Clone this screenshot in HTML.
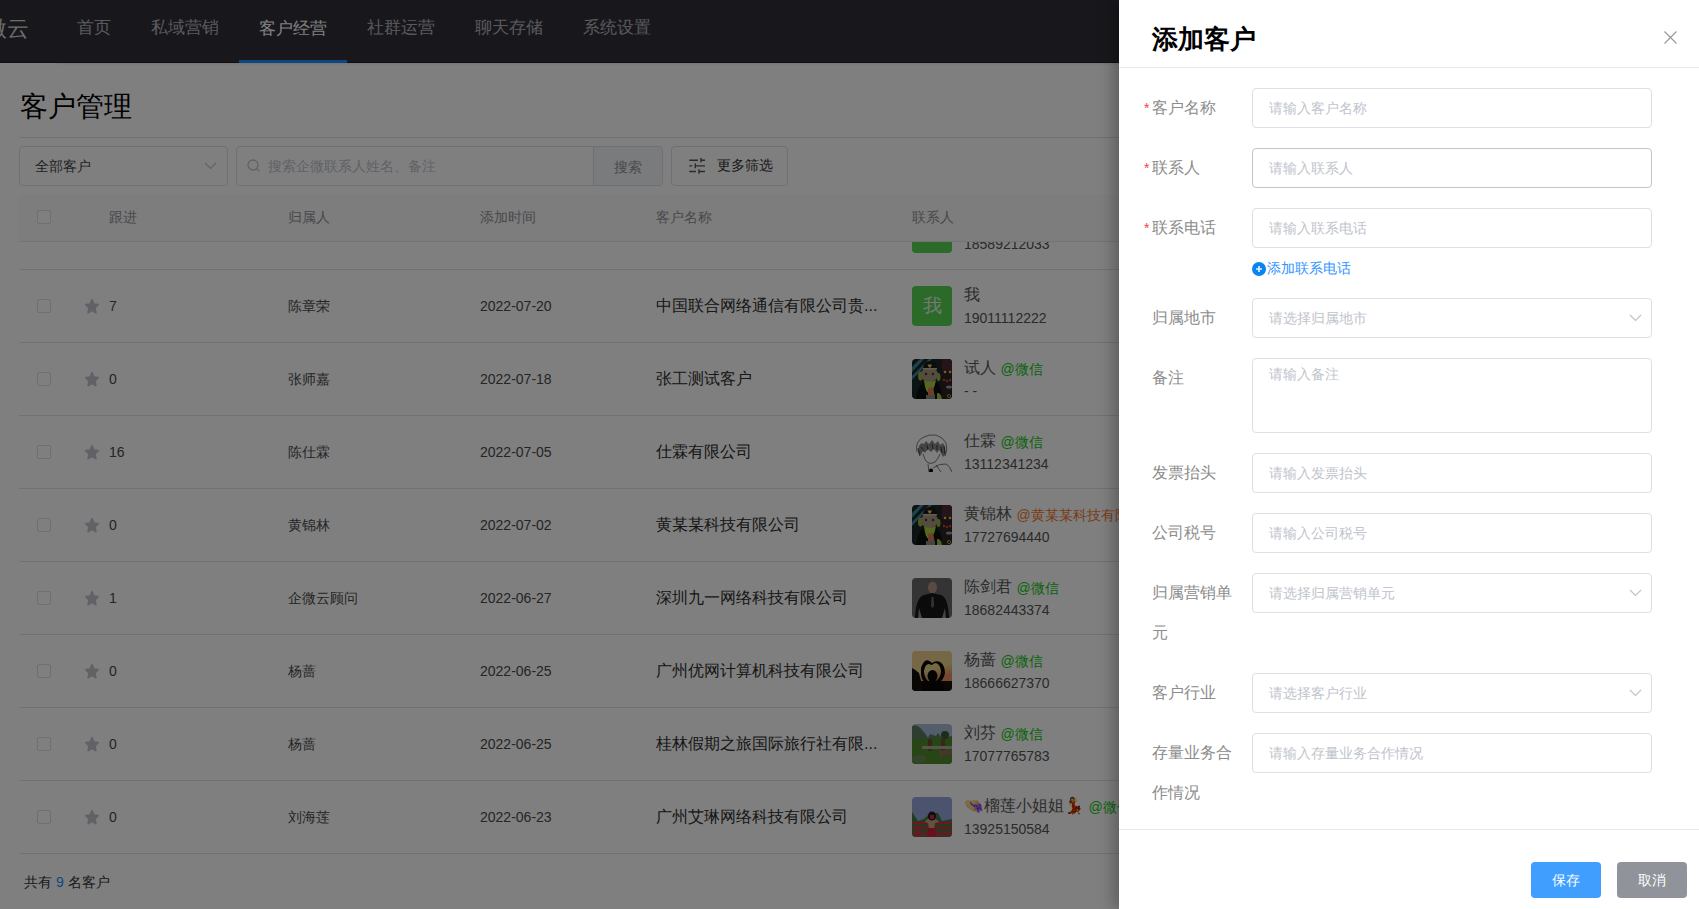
<!DOCTYPE html>
<html><head><meta charset="utf-8">
<style>
*{box-sizing:border-box;margin:0;padding:0}
html,body{width:1699px;height:909px;overflow:hidden;background:#fff;font-family:"Liberation Sans",sans-serif;position:relative}
.a{position:absolute;white-space:nowrap}
.nav{position:absolute;left:0;top:0;width:1699px;height:63px;background:#303039}
.nav .t{position:absolute;top:18px;font-size:17px;line-height:20px;color:#b4b4b8}
.nav .t.on{color:#fff;top:19px}
.line{position:absolute;height:1px;background:#dfe2ea}
.box{position:absolute;border:1px solid #dcdfe6;border-radius:4px;background:#fff}
.chev{position:absolute;width:12px;height:7px}
.th{position:absolute;top:208px;font-size:14px;line-height:18px;color:#909399}
.cb{position:absolute;width:14px;height:14px;border:1px solid #dcdfe6;border-radius:2px;background:#fff}
.row{position:absolute;left:19px;width:1680px;height:73px}
.mask{position:absolute;left:0;top:0;width:1699px;height:909px;background:rgba(0,0,0,.5)}
.drawer{position:absolute;left:1119px;top:0;width:580px;height:909px;background:#fff;box-shadow:-6px 0 14px rgba(0,0,0,.25)}
.lbl{position:absolute;left:33px;font-size:16px;line-height:40px;color:#8c8c8c}
.req{position:absolute;left:25px;font-size:14px;color:#f43f3f}
.inp{position:absolute;left:133px;width:400px;height:40px;border:1px solid #dcdfe6;border-radius:4px}
.ph{position:absolute;left:16px;top:0;font-size:14px;line-height:38px;color:#c0c4cc}
</style></head><body>

<div class="nav">
  <div class="a" style="left:-15px;top:17px;font-size:22px;line-height:24px;color:#d8d8d8">微云</div>
  <div class="t a" style="left:77px">首页</div>
  <div class="t a" style="left:151px">私域营销</div>
  <div class="t a on" style="left:259px">客户经营</div>
  <div class="t a" style="left:367px">社群运营</div>
  <div class="t a" style="left:475px">聊天存储</div>
  <div class="t a" style="left:583px">系统设置</div>
  <div class="a" style="left:0;top:62px;width:1699px;height:1px;background:#202028"></div>
  <div class="a" style="left:239px;top:60px;width:108px;height:3px;background:#1890ff"></div>
</div>

<div class="a" style="left:0;top:63px;width:57px;height:1px;background:#fff;box-shadow:0 0 0 0 #fff"></div>
<div class="a" style="left:57px;top:63px;width:1642px;height:2px;background:linear-gradient(#e8e8e8,#fff)"></div>
<div class="a" style="left:20px;top:92px;font-size:28px;line-height:30px;color:#000">客户管理</div>
<div class="line" style="left:19px;top:137px;width:1680px"></div>

<div class="box" style="left:19px;top:146px;width:209px;height:40px"></div>
<div class="a" style="left:35px;top:157px;font-size:14px;line-height:18px;color:#444">全部客户</div>
<svg class="a" style="left:204px;top:162px" width="13" height="8" viewBox="0 0 13 8"><path d="M1 1 L6.5 6.5 L12 1" fill="none" stroke="#c0c4cc" stroke-width="1.2"/></svg>

<div class="box" style="left:236px;top:146px;width:427px;height:40px"></div>
<div class="a" style="left:593px;top:147px;width:69px;height:38px;background:#f5f7fa;border-left:1px solid #dcdfe6;border-radius:0 4px 4px 0"></div>
<svg class="a" style="left:247px;top:159px" width="14" height="14" viewBox="0 0 14 14"><circle cx="6" cy="6" r="5" fill="none" stroke="#c0c4cc" stroke-width="1.3"/><path d="M9.5 9.5 L12.5 12.5" stroke="#c0c4cc" stroke-width="1.3"/></svg>
<div class="a" style="left:268px;top:157px;font-size:14px;line-height:18px;color:#c0c4cc">搜索企微联系人姓名、备注</div>
<div class="a" style="left:614px;top:158px;font-size:14px;line-height:18px;color:#909399">搜索</div>

<div class="box" style="left:671px;top:146px;width:117px;height:40px"></div>
<svg class="a" style="left:689px;top:158px" width="16" height="16" viewBox="0 0 16 16"><g stroke="#555" stroke-width="1.4" fill="none"><path d="M0.3 2.3H9M12 2.3H16M12 0V4.6"/><path d="M0.3 7.9H3.3M6.3 7.9H16M6.3 5.5V10.3"/><path d="M0.3 13.5H7M10 13.5H16M10 11.2V15.8"/></g></svg>
<div class="a" style="left:717px;top:156px;font-size:14px;line-height:18px;color:#333">更多筛选</div>

<!-- table body rows -->
<div id="rows"><div class="line" style="left:19px;top:269px;width:1680px"></div>
<div class="cb" style="left:37px;top:299px"></div>
<svg class="a" style="left:85px;top:299px" width="14" height="15" viewBox="1 1.2 22 21.5" preserveAspectRatio="none"><path d="M12 2.2l2.9 6.3 6.8.8-5 4.7 1.4 6.8L12 17.4l-6.1 3.4 1.4-6.8-5-4.7 6.8-.8z" fill="#c0c4cc" stroke="#c0c4cc" stroke-width="2.6" stroke-linejoin="round"/></svg>
<div class="a" style="left:109px;top:297px;font-size:14px;line-height:18px;color:#4a4a4a">7</div>
<div class="a" style="left:288px;top:297px;font-size:14px;line-height:18px;color:#4a4a4a">陈章荣</div>
<div class="a" style="left:480px;top:297px;font-size:14px;line-height:18px;color:#4a4a4a">2022-07-20</div>
<div class="a" style="left:656px;top:296px;font-size:16px;line-height:20px;color:#2e2e2e">中国联合网络通信有限公司贵...</div>
<div class="a" style="left:912px;top:286px;width:40px;height:40px;border-radius:4px;background:#56d452;color:#e8f5e8;font-size:19px;line-height:40px;text-align:center">我</div>
<div class="a" style="left:964px;top:285px;font-size:16px;line-height:20px;color:#585858">我</div>
<div class="a" style="left:964px;top:309px;font-size:14px;line-height:18px;color:#555">19011112222</div>
<div class="line" style="left:19px;top:342px;width:1680px"></div>
<div class="cb" style="left:37px;top:372px"></div>
<svg class="a" style="left:85px;top:372px" width="14" height="15" viewBox="1 1.2 22 21.5" preserveAspectRatio="none"><path d="M12 2.2l2.9 6.3 6.8.8-5 4.7 1.4 6.8L12 17.4l-6.1 3.4 1.4-6.8-5-4.7 6.8-.8z" fill="#c0c4cc" stroke="#c0c4cc" stroke-width="2.6" stroke-linejoin="round"/></svg>
<div class="a" style="left:109px;top:370px;font-size:14px;line-height:18px;color:#4a4a4a">0</div>
<div class="a" style="left:288px;top:370px;font-size:14px;line-height:18px;color:#4a4a4a">张师嘉</div>
<div class="a" style="left:480px;top:370px;font-size:14px;line-height:18px;color:#4a4a4a">2022-07-18</div>
<div class="a" style="left:656px;top:369px;font-size:16px;line-height:20px;color:#2e2e2e">张工测试客户</div>
<svg class="a" style="left:912px;top:359px;border-radius:4px" width="40" height="40" viewBox="0 0 40 40"><rect width="40" height="40" fill="#1a2426"/><path d="M0 8 L8 0 H12 L0 13Z M0 17 L17 0 H20 L0 21Z" fill="#3a8898"/><rect x="29" y="0" width="11" height="40" fill="#2a2224"/><path d="M30 0 H40 V12 H30Z" fill="#4a2830"/><circle cx="33" cy="13" r="1.3" fill="#e8c040"/><circle cx="38" cy="13" r="1.3" fill="#e8c040"/><g fill="#d04030"><circle cx="32" cy="21" r="1.2"/><circle cx="35" cy="22" r="1.2"/><circle cx="38" cy="21" r="1.2"/></g><ellipse cx="37" cy="28" rx="3" ry="1.5" fill="#9a9a9a"/><circle cx="37" cy="37" r="1.6" fill="none" stroke="#d0b040" stroke-width="0.8"/><path d="M4 40 Q6 26 12 23 H24 Q30 26 30 40Z" fill="#0c1010"/><ellipse cx="8.5" cy="17" rx="2.5" ry="4.5" fill="#9ab040"/><ellipse cx="26.5" cy="18" rx="2" ry="4" fill="#9ab040"/><ellipse cx="17.5" cy="15.5" rx="8.5" ry="7.5" fill="#a89880"/><circle cx="14" cy="15" r="1.2" fill="#3a3028"/><circle cx="21" cy="15" r="1.2" fill="#3a3028"/><path d="M12 21 Q13 33 17 34 Q22 33 24 21 Q18 24 12 21Z" fill="#b0cc48"/><path d="M16 29 L21 28 L23 38 H16Z" fill="#d88050"/><rect x="14" y="36" width="9" height="4" fill="#8a8a8a"/><path d="M25 34 Q29 33 30 40 H25Z" fill="#a0c040"/><path d="M11 9 Q12 2 18 2 Q25 2 25 9Z" fill="#181818"/><path d="M15.5 5.5 L20 5.5 L18.5 8.5 L17 8.5Z" fill="#e8d060"/><path d="M11 9 H25 V10.5 H11Z" fill="#c8b898"/></svg>
<div class="a" style="left:964px;top:358px;font-size:16px;line-height:20px;color:#585858">试人 <span style="font-size:14px;color:#10c810;position:relative;top:1px">@微信</span></div>
<div class="a" style="left:964px;top:382px;font-size:14px;line-height:18px;color:#555">- -</div>
<div class="line" style="left:19px;top:415px;width:1680px"></div>
<div class="cb" style="left:37px;top:445px"></div>
<svg class="a" style="left:85px;top:445px" width="14" height="15" viewBox="1 1.2 22 21.5" preserveAspectRatio="none"><path d="M12 2.2l2.9 6.3 6.8.8-5 4.7 1.4 6.8L12 17.4l-6.1 3.4 1.4-6.8-5-4.7 6.8-.8z" fill="#c0c4cc" stroke="#c0c4cc" stroke-width="2.6" stroke-linejoin="round"/></svg>
<div class="a" style="left:109px;top:443px;font-size:14px;line-height:18px;color:#4a4a4a">16</div>
<div class="a" style="left:288px;top:443px;font-size:14px;line-height:18px;color:#4a4a4a">陈仕霖</div>
<div class="a" style="left:480px;top:443px;font-size:14px;line-height:18px;color:#4a4a4a">2022-07-05</div>
<div class="a" style="left:656px;top:442px;font-size:16px;line-height:20px;color:#2e2e2e">仕霖有限公司</div>
<svg class="a" style="left:912px;top:432px" width="40" height="40" viewBox="0 0 40 40"><g fill="none" stroke="#444" stroke-width="0.7"><path d="M5 20 Q3 10 10 6 Q16 2 24 3 Q31 5 34 11 Q36 18 33 24"/><path d="M11 22 Q13 29 16 31 Q20 32 23 30 Q26 27 28 22"/><path d="M16 32 L17 40 M21 36 Q28 31 34 32 Q38 34 40 40 M24 33 L29 40"/></g><path d="M7 14 Q9 10 12 12 L14 9 L17 12 L20 8 L23 12 L26 9 L28 13 L31 11 L33 15 L34 22 L31 25 L29 21 L27 18 L25 21 L22 17 L19 20 L16 17 L13 21 L11 19 L9 23 L6 21Z" fill="#8a8a8a"/><path d="M9 15 L12 19 M15 13 L16 18 M20 12 L21 17 M25 13 L25 18 M29 15 L30 21 M6 16 L8 24 M32 14 L33 22" stroke="#333" stroke-width="0.9"/><circle cx="19" cy="38.5" r="2" fill="#000"/></svg>
<div class="a" style="left:964px;top:431px;font-size:16px;line-height:20px;color:#585858">仕霖 <span style="font-size:14px;color:#10c810;position:relative;top:1px">@微信</span></div>
<div class="a" style="left:964px;top:455px;font-size:14px;line-height:18px;color:#555">13112341234</div>
<div class="line" style="left:19px;top:488px;width:1680px"></div>
<div class="cb" style="left:37px;top:518px"></div>
<svg class="a" style="left:85px;top:518px" width="14" height="15" viewBox="1 1.2 22 21.5" preserveAspectRatio="none"><path d="M12 2.2l2.9 6.3 6.8.8-5 4.7 1.4 6.8L12 17.4l-6.1 3.4 1.4-6.8-5-4.7 6.8-.8z" fill="#c0c4cc" stroke="#c0c4cc" stroke-width="2.6" stroke-linejoin="round"/></svg>
<div class="a" style="left:109px;top:516px;font-size:14px;line-height:18px;color:#4a4a4a">0</div>
<div class="a" style="left:288px;top:516px;font-size:14px;line-height:18px;color:#4a4a4a">黄锦林</div>
<div class="a" style="left:480px;top:516px;font-size:14px;line-height:18px;color:#4a4a4a">2022-07-02</div>
<div class="a" style="left:656px;top:515px;font-size:16px;line-height:20px;color:#2e2e2e">黄某某科技有限公司</div>
<svg class="a" style="left:912px;top:505px;border-radius:4px" width="40" height="40" viewBox="0 0 40 40"><rect width="40" height="40" fill="#1a2426"/><path d="M0 8 L8 0 H12 L0 13Z M0 17 L17 0 H20 L0 21Z" fill="#3a8898"/><rect x="29" y="0" width="11" height="40" fill="#2a2224"/><path d="M30 0 H40 V12 H30Z" fill="#4a2830"/><circle cx="33" cy="13" r="1.3" fill="#e8c040"/><circle cx="38" cy="13" r="1.3" fill="#e8c040"/><g fill="#d04030"><circle cx="32" cy="21" r="1.2"/><circle cx="35" cy="22" r="1.2"/><circle cx="38" cy="21" r="1.2"/></g><ellipse cx="37" cy="28" rx="3" ry="1.5" fill="#9a9a9a"/><circle cx="37" cy="37" r="1.6" fill="none" stroke="#d0b040" stroke-width="0.8"/><path d="M4 40 Q6 26 12 23 H24 Q30 26 30 40Z" fill="#0c1010"/><ellipse cx="8.5" cy="17" rx="2.5" ry="4.5" fill="#9ab040"/><ellipse cx="26.5" cy="18" rx="2" ry="4" fill="#9ab040"/><ellipse cx="17.5" cy="15.5" rx="8.5" ry="7.5" fill="#a89880"/><circle cx="14" cy="15" r="1.2" fill="#3a3028"/><circle cx="21" cy="15" r="1.2" fill="#3a3028"/><path d="M12 21 Q13 33 17 34 Q22 33 24 21 Q18 24 12 21Z" fill="#b0cc48"/><path d="M16 29 L21 28 L23 38 H16Z" fill="#d88050"/><rect x="14" y="36" width="9" height="4" fill="#8a8a8a"/><path d="M25 34 Q29 33 30 40 H25Z" fill="#a0c040"/><path d="M11 9 Q12 2 18 2 Q25 2 25 9Z" fill="#181818"/><path d="M15.5 5.5 L20 5.5 L18.5 8.5 L17 8.5Z" fill="#e8d060"/><path d="M11 9 H25 V10.5 H11Z" fill="#c8b898"/></svg>
<div class="a" style="left:964px;top:504px;font-size:16px;line-height:20px;color:#585858">黄锦林 <span style="font-size:14px;color:#f07a30;position:relative;top:1px">@黄某某科技有限公司</span></div>
<div class="a" style="left:964px;top:528px;font-size:14px;line-height:18px;color:#555">17727694440</div>
<div class="line" style="left:19px;top:561px;width:1680px"></div>
<div class="cb" style="left:37px;top:591px"></div>
<svg class="a" style="left:85px;top:591px" width="14" height="15" viewBox="1 1.2 22 21.5" preserveAspectRatio="none"><path d="M12 2.2l2.9 6.3 6.8.8-5 4.7 1.4 6.8L12 17.4l-6.1 3.4 1.4-6.8-5-4.7 6.8-.8z" fill="#c0c4cc" stroke="#c0c4cc" stroke-width="2.6" stroke-linejoin="round"/></svg>
<div class="a" style="left:109px;top:589px;font-size:14px;line-height:18px;color:#4a4a4a">1</div>
<div class="a" style="left:288px;top:589px;font-size:14px;line-height:18px;color:#4a4a4a">企微云顾问</div>
<div class="a" style="left:480px;top:589px;font-size:14px;line-height:18px;color:#4a4a4a">2022-06-27</div>
<div class="a" style="left:656px;top:588px;font-size:16px;line-height:20px;color:#2e2e2e">深圳九一网络科技有限公司</div>
<svg class="a" style="left:912px;top:578px;border-radius:4px" width="40" height="40" viewBox="0 0 40 40"><rect width="40" height="40" fill="#686868"/><ellipse cx="20.5" cy="9.5" rx="4.5" ry="6" fill="#b49486"/><path d="M3 40 Q4 19 12 17 L20 15 L29 17 Q36 19 37 40Z" fill="#161618"/><path d="M19.5 19 L21.5 19 L22 28 L20.5 30 L19 28Z" fill="#666"/><path d="M7 30 L10 40 H6Z M33 30 L30 40 H34Z" fill="#888"/></svg>
<div class="a" style="left:964px;top:577px;font-size:16px;line-height:20px;color:#585858">陈剑君 <span style="font-size:14px;color:#10c810;position:relative;top:1px">@微信</span></div>
<div class="a" style="left:964px;top:601px;font-size:14px;line-height:18px;color:#555">18682443374</div>
<div class="line" style="left:19px;top:634px;width:1680px"></div>
<div class="cb" style="left:37px;top:664px"></div>
<svg class="a" style="left:85px;top:664px" width="14" height="15" viewBox="1 1.2 22 21.5" preserveAspectRatio="none"><path d="M12 2.2l2.9 6.3 6.8.8-5 4.7 1.4 6.8L12 17.4l-6.1 3.4 1.4-6.8-5-4.7 6.8-.8z" fill="#c0c4cc" stroke="#c0c4cc" stroke-width="2.6" stroke-linejoin="round"/></svg>
<div class="a" style="left:109px;top:662px;font-size:14px;line-height:18px;color:#4a4a4a">0</div>
<div class="a" style="left:288px;top:662px;font-size:14px;line-height:18px;color:#4a4a4a">杨蔷</div>
<div class="a" style="left:480px;top:662px;font-size:14px;line-height:18px;color:#4a4a4a">2022-06-25</div>
<div class="a" style="left:656px;top:661px;font-size:16px;line-height:20px;color:#2e2e2e">广州优网计算机科技有限公司</div>
<svg class="a" style="left:912px;top:651px;border-radius:4px" width="40" height="40" viewBox="0 0 40 40"><defs><linearGradient id="hg" x1="0" y1="0" x2="0.3" y2="1"><stop offset="0" stop-color="#f0c88a"/><stop offset="0.55" stop-color="#e8d48c"/><stop offset="0.8" stop-color="#e89060"/></linearGradient></defs><rect width="40" height="40" fill="url(#hg)"/><path d="M0 17 Q4 19 7 22 L9 30 V40 H0Z" fill="#100c08"/><path d="M0 30 H40 V40 H0Z" fill="#140e0a"/><path d="M20 12 Q16 8 13 10 Q8 14 9 24 Q10 30 14 32 L16 30 Q12 26 12 20 Q13 13 17 13 Q19 14 20 14 Q22 12 24 12 Q28 13 29 20 Q29 26 24 30 L27 32 Q32 28 33 22 Q33 14 28 11 Q24 9 20 12Z" fill="#0c0806"/><ellipse cx="20.5" cy="25" rx="5" ry="6" fill="#0c0806"/><path d="M10 32 Q20 28 32 32 V40 H10Z" fill="#0c0806"/></svg>
<div class="a" style="left:964px;top:650px;font-size:16px;line-height:20px;color:#585858">杨蔷 <span style="font-size:14px;color:#10c810;position:relative;top:1px">@微信</span></div>
<div class="a" style="left:964px;top:674px;font-size:14px;line-height:18px;color:#555">18666627370</div>
<div class="line" style="left:19px;top:707px;width:1680px"></div>
<div class="cb" style="left:37px;top:737px"></div>
<svg class="a" style="left:85px;top:737px" width="14" height="15" viewBox="1 1.2 22 21.5" preserveAspectRatio="none"><path d="M12 2.2l2.9 6.3 6.8.8-5 4.7 1.4 6.8L12 17.4l-6.1 3.4 1.4-6.8-5-4.7 6.8-.8z" fill="#c0c4cc" stroke="#c0c4cc" stroke-width="2.6" stroke-linejoin="round"/></svg>
<div class="a" style="left:109px;top:735px;font-size:14px;line-height:18px;color:#4a4a4a">0</div>
<div class="a" style="left:288px;top:735px;font-size:14px;line-height:18px;color:#4a4a4a">杨蔷</div>
<div class="a" style="left:480px;top:735px;font-size:14px;line-height:18px;color:#4a4a4a">2022-06-25</div>
<div class="a" style="left:656px;top:734px;font-size:16px;line-height:20px;color:#2e2e2e">桂林假期之旅国际旅行社有限...</div>
<svg class="a" style="left:912px;top:724px;border-radius:4px" width="40" height="40" viewBox="0 0 40 40"><rect width="40" height="40" fill="#a8bcd4"/><path d="M0 2 Q6 0 10 6 Q14 10 16 14 L18 10 L24 12 L26 9 L30 14 L40 12 V40 H0Z" fill="#5a7a60"/><path d="M0 15 L40 14 V40 H0Z" fill="#4e8a2a"/><rect x="16" y="15" width="4" height="12" fill="#6a5030"/><rect x="29" y="15" width="4" height="12" fill="#6a5030"/><path d="M10 22 H40 V25 H10Z" fill="#b0a898"/><path d="M28 27 H40 V30 H28Z M29 30 V36 M37 30 V36" fill="#8a7050" stroke="#8a7050" stroke-width="1.5"/><circle cx="33" cy="11" r="4" fill="#3a5a30"/><ellipse cx="7" cy="35" rx="7" ry="4" fill="#6a8a5a"/></svg>
<div class="a" style="left:964px;top:723px;font-size:16px;line-height:20px;color:#585858">刘芬 <span style="font-size:14px;color:#10c810;position:relative;top:1px">@微信</span></div>
<div class="a" style="left:964px;top:747px;font-size:14px;line-height:18px;color:#555">17077765783</div>
<div class="line" style="left:19px;top:780px;width:1680px"></div>
<div class="cb" style="left:37px;top:810px"></div>
<svg class="a" style="left:85px;top:810px" width="14" height="15" viewBox="1 1.2 22 21.5" preserveAspectRatio="none"><path d="M12 2.2l2.9 6.3 6.8.8-5 4.7 1.4 6.8L12 17.4l-6.1 3.4 1.4-6.8-5-4.7 6.8-.8z" fill="#c0c4cc" stroke="#c0c4cc" stroke-width="2.6" stroke-linejoin="round"/></svg>
<div class="a" style="left:109px;top:808px;font-size:14px;line-height:18px;color:#4a4a4a">0</div>
<div class="a" style="left:288px;top:808px;font-size:14px;line-height:18px;color:#4a4a4a">刘海莲</div>
<div class="a" style="left:480px;top:808px;font-size:14px;line-height:18px;color:#4a4a4a">2022-06-23</div>
<div class="a" style="left:656px;top:807px;font-size:16px;line-height:20px;color:#2e2e2e">广州艾琳网络科技有限公司</div>
<svg class="a" style="left:912px;top:797px;border-radius:4px" width="40" height="40" viewBox="0 0 40 40"><rect width="40" height="40" fill="#96a6dc"/><path d="M0 15 L6 24 L12 22 L18 16 L26 16 L30 24 L40 22 V40 H0Z" fill="#3e7a3e"/><g fill="#e02848"><rect x="0" y="25" width="40" height="2"/><rect x="0" y="29" width="40" height="1.4"/><rect x="0" y="32" width="40" height="1.4"/><rect x="0" y="35" width="40" height="1.4"/><rect x="0" y="38" width="40" height="1.4"/><rect x="5" y="25" width="2" height="15"/></g><path d="M13 25 Q14 22 17 22 H23 Q26 23 27 25 L23 26 L22 32 H17 L16 26Z" fill="#d0a080"/><ellipse cx="20" cy="19" rx="4" ry="4.5" fill="#201820"/><path d="M18 18 h4 v4 h-4z" fill="#d02050"/><path d="M16 31 H23 L24 40 H15Z" fill="#d0203a"/></svg>
<div class="a" style="left:964px;top:796px;font-size:16px;line-height:20px;color:#585858">👒榴莲小姐姐💃 <span style="font-size:14px;color:#10c810;position:relative;top:1px">@微信</span></div>
<div class="a" style="left:964px;top:820px;font-size:14px;line-height:18px;color:#555">13925150584</div>
<div class="line" style="left:19px;top:853px;width:1680px"></div></div><!--/rows-->

<!-- partial previous row -->
<div class="a" style="left:912px;top:213px;width:40px;height:40px;border-radius:4px;background:#56d452"></div>
<div class="a" style="left:964px;top:235px;font-size:14px;line-height:18px;color:#555">18589212033</div>

<!-- table header -->
<div class="a" style="left:19px;top:194px;width:1680px;height:48px;background:#fafafa;border-bottom:1px solid #e6e6ea"></div>
<div class="cb" style="left:37px;top:210px"></div>
<div class="th a" style="left:109px">跟进</div>
<div class="th a" style="left:288px">归属人</div>
<div class="th a" style="left:480px">添加时间</div>
<div class="th a" style="left:656px">客户名称</div>
<div class="th a" style="left:912px">联系人</div>

<div class="a" style="left:24px;top:873px;font-size:14px;line-height:18px;color:#333">共有 <span style="color:#1890ff">9</span> 名客户</div>

<div class="mask"></div>

<div class="drawer">
  <div class="a" style="left:33px;top:24px;font-size:26px;line-height:30px;font-weight:bold;color:#000">添加客户</div>
  <svg class="a" style="left:545px;top:31px" width="13" height="13" viewBox="0 0 13 13"><path d="M0.5 0.5L12.5 12.5M12.5 0.5L0.5 12.5" stroke="#999" stroke-width="1.2"/></svg>
  <div class="a" style="left:0;top:67px;width:580px;height:1px;background:#e8e8e8"></div>

  <div id="form"><div class="req a" style="top:100px;line-height:16px">*</div>
<div class="lbl a" style="top:88px">客户名称</div>
<div class="inp a" style="top:88px;height:40px">
<div class="ph a">请输入客户名称</div>
</div>
<div class="req a" style="top:160px;line-height:16px">*</div>
<div class="lbl a" style="top:148px">联系人</div>
<div class="inp a" style="top:148px;height:40px;border-color:#c0c4cc">
<div class="ph a">请输入联系人</div>
</div>
<div class="req a" style="top:220px;line-height:16px">*</div>
<div class="lbl a" style="top:208px">联系电话</div>
<div class="inp a" style="top:208px;height:40px">
<div class="ph a">请输入联系电话</div>
</div>
<div class="lbl a" style="top:298px">归属地市</div>
<div class="inp a" style="top:298px;height:40px">
<div class="ph a">请选择归属地市</div>
<svg class="a" style="left:376px;top:15px" width="13" height="8" viewBox="0 0 13 8"><path d="M1 1 L6.5 6.5 L12 1" fill="none" stroke="#c0c4cc" stroke-width="1.2"/></svg>
</div>
<div class="lbl a" style="top:358px">备注</div>
<div class="inp a" style="top:358px;height:75px">
<div class="ph a" style="top:5px;line-height:20px">请输入备注</div>
</div>
<div class="lbl a" style="top:453px">发票抬头</div>
<div class="inp a" style="top:453px;height:40px">
<div class="ph a">请输入发票抬头</div>
</div>
<div class="lbl a" style="top:513px">公司税号</div>
<div class="inp a" style="top:513px;height:40px">
<div class="ph a">请输入公司税号</div>
</div>
<div class="lbl a" style="top:573px">归属营销单<br>元</div>
<div class="inp a" style="top:573px;height:40px">
<div class="ph a">请选择归属营销单元</div>
<svg class="a" style="left:376px;top:15px" width="13" height="8" viewBox="0 0 13 8"><path d="M1 1 L6.5 6.5 L12 1" fill="none" stroke="#c0c4cc" stroke-width="1.2"/></svg>
</div>
<div class="lbl a" style="top:673px">客户行业</div>
<div class="inp a" style="top:673px;height:40px">
<div class="ph a">请选择客户行业</div>
<svg class="a" style="left:376px;top:15px" width="13" height="8" viewBox="0 0 13 8"><path d="M1 1 L6.5 6.5 L12 1" fill="none" stroke="#c0c4cc" stroke-width="1.2"/></svg>
</div>
<div class="lbl a" style="top:733px">存量业务合<br>作情况</div>
<div class="inp a" style="top:733px;height:40px">
<div class="ph a">请输入存量业务合作情况</div>
</div>
<svg class="a" style="left:133px;top:262px" width="14" height="14" viewBox="0 0 14 14"><circle cx="7" cy="7" r="7" fill="#0a84ef"/><path d="M7 4V10M4 7H10" stroke="#dff0ff" stroke-width="1.7"/></svg>
<div class="a" style="left:148px;top:259px;font-size:14px;line-height:18px;color:#3394ff">添加联系电话</div></div><!--/form-->

  <div class="a" style="left:0;top:829px;width:580px;height:1px;background:#e8e8e8"></div>
  <div class="a" style="left:412px;top:862px;width:70px;height:36px;border-radius:4px;background:#409eff;color:#fff;font-size:14px;line-height:36px;text-align:center">保存</div>
  <div class="a" style="left:498px;top:862px;width:70px;height:36px;border-radius:4px;background:#909399;color:#fff;font-size:14px;line-height:36px;text-align:center">取消</div>
</div>

</body></html>
